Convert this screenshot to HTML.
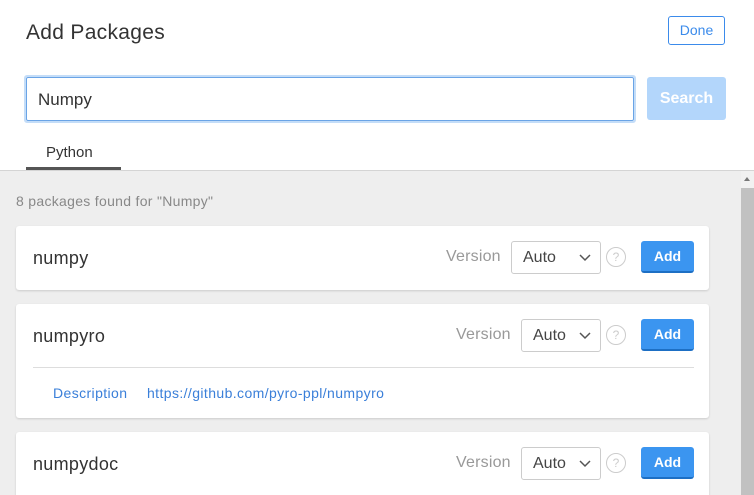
<!DOCTYPE html><html style="width:754px;height:495px;overflow:hidden"><head><style>
*{margin:0;padding:0;box-sizing:border-box}
body{width:754px;height:495px;overflow:hidden;background:#fff;font-family:"Liberation Sans",sans-serif;position:relative}
.a{position:absolute}
.card{position:absolute;left:16px;width:693px;background:#fff;border-radius:3px;box-shadow:0 1px 2px rgba(0,0,0,.15)}
.name{position:absolute;left:17px;font-size:18px;color:#333;letter-spacing:.3px}
.ver{position:absolute;font-size:16px;color:#999;letter-spacing:.2px}
.sel{position:absolute;width:90px;height:33px;border:1px solid #ccc;border-radius:3px;font-size:16px;color:#444;padding:7px 0 0 11px}
.sel svg{position:absolute;right:9px;top:12px}
.q{position:absolute;width:20px;height:20px;border:1px solid #ccc;border-radius:50%;color:#ccc;font-size:12px;text-align:center;line-height:18px}
.add{position:absolute;left:625px;width:53px;height:32px;background:#3b95f0;border-bottom:2px solid #1d6fc4;border-radius:3px;color:#fff;font-weight:bold;font-size:14px;text-align:center;line-height:31px}
.lnk{position:absolute;top:81px;font-size:14px;color:#3a7fd9;letter-spacing:.4px}
</style></head><body>
<div class="a" style="left:26px;top:21px;font-size:21px;color:#333;letter-spacing:.3px">Add Packages</div>
<div class="a" style="left:668px;top:16px;width:57px;height:29px;border:1px solid #3b8beb;border-radius:3px;color:#3b8beb;font-size:14px;text-align:center;line-height:27px">Done</div>
<div class="a" style="left:24px;top:75px;width:612px;height:48px;border:2px solid #c4ddf8;border-radius:3px"></div>
<div class="a" style="left:26px;top:77px;width:608px;height:44px;border:1px solid #6aa4e6;border-radius:2px;font-size:17px;color:#333;padding:12px 0 0 11px">Numpy</div>
<div class="a" style="left:647px;top:77px;width:79px;height:43px;background:#b3d6fb;border-radius:3px;color:#fff;font-weight:bold;font-size:16px;text-align:center;line-height:43px">Search</div>
<div class="a" style="left:46px;top:144px;font-size:15px;color:#333">Python</div>
<div class="a" style="left:26px;top:167px;width:95px;height:3px;background:#555"></div>
<div class="a" style="left:0;top:170px;width:754px;height:325px;background:#eee;border-top:1px solid #d4d4d4;overflow:hidden">
<div class="a" style="left:741px;top:0;width:13px;height:324px;background:#f1f1f1"></div>
<div class="a" style="left:741px;top:17px;width:13px;height:307px;background:#c1c1c1"></div>
<div class="a" style="left:744px;top:6px;width:0;height:0;border-left:3.5px solid transparent;border-right:3.5px solid transparent;border-bottom:4px solid #777"></div>
<div class="a" style="left:16px;top:22px;font-size:14px;color:#888;letter-spacing:.3px">8 packages found for "Numpy"</div>

<div class="card" style="top:55px;height:64px">
<div class="name" style="top:22px">numpy</div>
<div class="ver" style="left:430px;top:22px">Version</div>
<div class="sel" style="left:495px;top:15px">Auto<svg width="12" height="8"><path d="M1 1l5 5 5-5" stroke="#555" stroke-width="1.5" fill="none"/></svg></div>
<div class="q" style="left:590px;top:21px">?</div>
<div class="add" style="top:15px">Add</div>
</div>

<div class="card" style="top:133px;height:114px">
<div class="name" style="top:22px">numpyro</div>
<div class="ver" style="left:440px;top:22px">Version</div>
<div class="sel" style="left:505px;top:15px;width:80px">Auto<svg width="12" height="8"><path d="M1 1l5 5 5-5" stroke="#555" stroke-width="1.5" fill="none"/></svg></div>
<div class="q" style="left:590px;top:21px">?</div>
<div class="add" style="top:15px">Add</div>
<div class="a" style="left:17px;top:63px;width:661px;height:1px;background:#ddd"></div>
<div class="lnk" style="left:37px">Description</div>
<div class="lnk" style="left:131px">https://github.com/pyro-ppl/numpyro</div>
</div>

<div class="card" style="top:261px;height:80px">
<div class="name" style="top:22px">numpydoc</div>
<div class="ver" style="left:440px;top:22px">Version</div>
<div class="sel" style="left:505px;top:15px;width:80px">Auto<svg width="12" height="8"><path d="M1 1l5 5 5-5" stroke="#555" stroke-width="1.5" fill="none"/></svg></div>
<div class="q" style="left:590px;top:21px">?</div>
<div class="add" style="top:15px">Add</div>
</div>
</div>
</body></html>
